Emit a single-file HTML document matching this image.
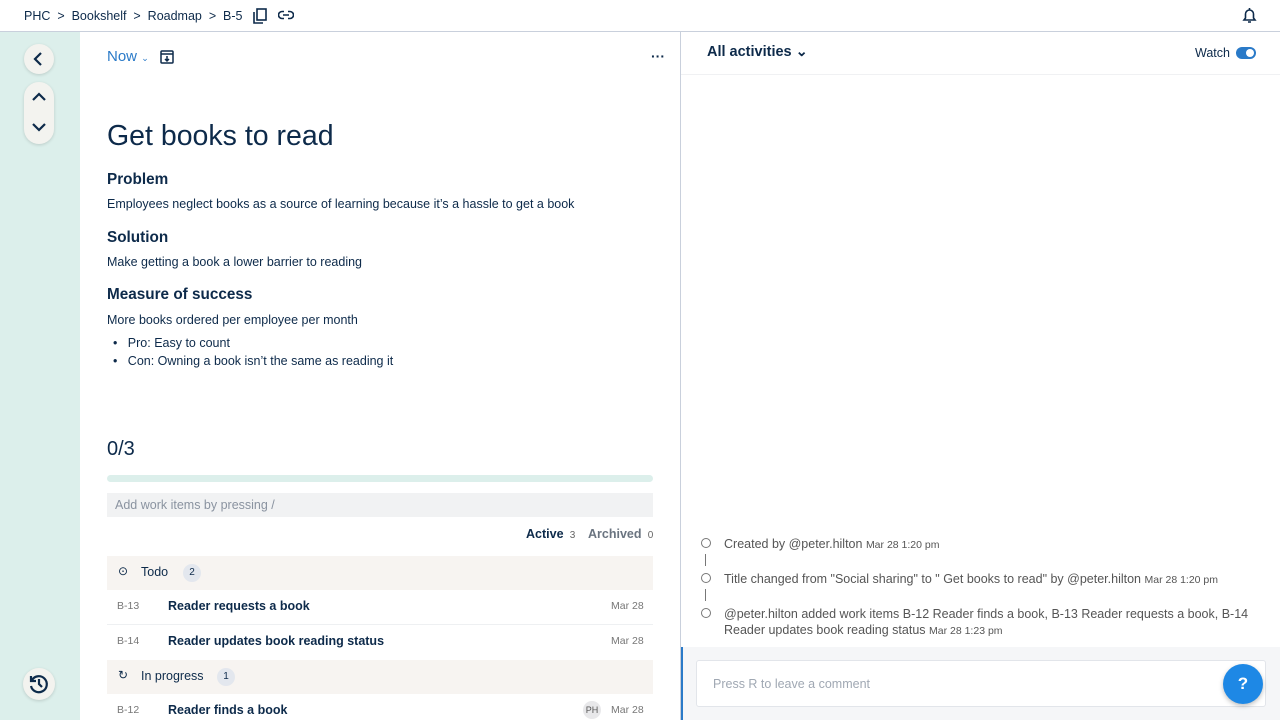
<!DOCTYPE html>
<html><head><meta charset="utf-8"><style>
*{box-sizing:border-box;margin:0;padding:0}
body{width:1280px;height:720px;overflow:hidden;font-family:"Liberation Sans",sans-serif;color:#0d2a4a;background:#fff;position:relative}
.a{position:absolute}
.top{left:0;top:0;width:1280px;height:32px;border-bottom:1px solid #c9d0dc;font-size:12.5px}
.side{left:0;top:32px;width:80px;height:688px;background:#dcefeb}
.btn{background:#f3f3ef;border-radius:16px;width:30px;box-shadow:0 1px 3px rgba(0,0,0,.15)}
.h3{font-size:15px;font-weight:bold}
.p{font-size:12.5px}
.row{left:107px;width:546px;font-size:12.5px}
.grp{background:#f7f4f1;height:34px}
.badge{display:inline-block;background:#e3e7ee;border-radius:9px;width:18px;height:18px;font-size:10px;text-align:center;line-height:18px}
.act{font-size:12.5px;color:#555}
.act small{font-size:10.5px}
.dot{width:10px;height:10px;border:1px solid #777;border-radius:50%}
</style></head><body>
<div class="a top">
<div class="a" style="left:24px;top:9px">PHC &nbsp;&gt;&nbsp; Bookshelf &nbsp;&gt;&nbsp; Roadmap &nbsp;&gt;&nbsp; B-5</div>
<svg class="a" style="left:253px;top:8px" width="14" height="16" viewBox="0 0 14 16" fill="none" stroke="#0d2a4a" stroke-width="1.6"><rect x="4" y="1" width="9" height="11"/><path d="M1 4v11h9"/></svg>
<svg class="a" style="left:278px;top:10px" width="16" height="10" viewBox="0 0 16 10" fill="none" stroke="#0d2a4a" stroke-width="1.6"><path d="M6 1.5H4a3.5 3.5 0 0 0 0 7h2M10 1.5h2a3.5 3.5 0 0 1 0 7h-2M5 5h6"/></svg>
<svg class="a" style="left:1242px;top:7px" width="15" height="17" viewBox="0 0 15 17" fill="none" stroke="#0d2a4a" stroke-width="1.6"><path d="M2 13h11l-1.5-2V7a4 4 0 0 0-8 0v4z M6 15h3 M7.5 1v2"/></svg>
</div>
<div class="a side">
<div class="a btn" style="left:24px;top:12px;height:30px"><svg width="30" height="30"><path d="M17 9l-6 6 6 6" fill="none" stroke="#0d2a4a" stroke-width="2.2"/></svg></div>
<div class="a btn" style="left:24px;top:50px;height:62px"><svg width="30" height="62"><path d="M9 18l6-6 6 6M9 42l6 6 6-6" fill="none" stroke="#0d2a4a" stroke-width="2.2"/></svg></div>
<div class="a btn" style="left:23px;top:636px;height:32px;width:32px"><svg width="32" height="32" viewBox="0 0 32 32" fill="none" stroke="#0d2a4a" stroke-width="2.2"><path d="M9 12a8 8 0 1 1-1 6"/><path d="M8 8v5h5" /><path d="M16 11v5l3 3"/></svg></div>
</div>
<div class="a" style="left:680px;top:32px;width:1px;height:688px;background:#c9d0dc"></div>
<div class="a" style="left:107px;top:48px;font-size:15px;color:#2a7ac8">Now <span style="font-size:9px">⌄</span></div>
<svg class="a" style="left:160px;top:50px" width="14" height="14" viewBox="0 0 14 14" fill="none" stroke="#0d2a4a" stroke-width="1.5"><rect x="1" y="1" width="12" height="12" rx="1"/><path d="M1 4h12M7 6v5M5 9l2 2 2-2"/></svg>
<div class="a" style="left:651px;top:48px;font-size:14px;font-weight:bold">···</div>
<div class="a" style="left:107px;top:120px;font-size:28.5px">Get books to read</div>
<div class="a h3" style="left:107px;top:171px;font-size:15.3px">Problem</div>
<div class="a p" style="left:107px;top:197px">Employees neglect books as a source of learning because it’s a hassle to get a book</div>
<div class="a h3" style="left:107px;top:229px;font-size:15.3px">Solution</div>
<div class="a p" style="left:107px;top:255px">Make getting a book a lower barrier to reading</div>
<div class="a h3" style="left:107px;top:286px;font-size:15.3px">Measure of success</div>
<div class="a p" style="left:107px;top:313px">More books ordered per employee per month</div>
<div class="a p" style="left:113px;top:336px">•&nbsp;&nbsp; Pro: Easy to count</div>
<div class="a p" style="left:113px;top:354px">•&nbsp;&nbsp; Con: Owning a book isn’t the same as reading it</div>
<div class="a" style="left:107px;top:438px;font-size:20px">0/3</div>
<div class="a" style="left:107px;top:475px;width:546px;height:7px;border-radius:4px;background:#dcefeb"></div>
<div class="a" style="left:107px;top:493px;width:546px;height:24px;background:#f1f2f3;font-size:12.5px;color:#8a93a0;padding:5px 8px">Add work items by pressing /</div>
<div class="a" style="left:526px;top:527px;font-size:12.5px;font-weight:bold">Active <span style="font-weight:normal;font-size:10px;color:#666">&nbsp;3</span></div>
<div class="a" style="left:588px;top:527px;font-size:12.5px;font-weight:bold;color:#6a7480">Archived <span style="font-weight:normal;font-size:10px;color:#666">&nbsp;0</span></div>
<div class="a row grp" style="top:556px"><span class="a" style="left:11px;top:8px;font-size:12px">⊙</span><span class="a" style="left:34px;top:9px">Todo</span><span class="a badge" style="left:76px;top:8px">2</span></div>
<div class="a row" style="top:590px;height:35px;border-bottom:1px solid #eef0f2"><span class="a" style="left:10px;top:10px;font-size:10.5px;color:#777">B-13</span><span class="a" style="left:61px;top:9px;font-weight:bold">Reader requests a book</span><span class="a" style="left:504px;top:10px;font-size:10.5px;color:#777">Mar 28</span></div>
<div class="a row" style="top:625px;height:34px"><span class="a" style="left:10px;top:10px;font-size:10.5px;color:#777">B-14</span><span class="a" style="left:61px;top:9px;font-weight:bold">Reader updates book reading status</span><span class="a" style="left:504px;top:10px;font-size:10.5px;color:#777">Mar 28</span></div>
<div class="a row grp" style="top:660px"><span class="a" style="left:11px;top:8px;font-size:12px">↻</span><span class="a" style="left:34px;top:9px">In progress</span><span class="a badge" style="left:110px;top:8px">1</span></div>
<div class="a row" style="top:694px;height:26px"><span class="a" style="left:10px;top:10px;font-size:10.5px;color:#777">B-12</span><span class="a" style="left:61px;top:9px;font-weight:bold">Reader finds a book</span><span class="a" style="left:476px;top:7px;width:18px;height:18px;border-radius:50%;background:#e8e8ea;font-size:9px;text-align:center;line-height:18px;color:#555">PH</span><span class="a" style="left:504px;top:10px;font-size:10.5px;color:#777">Mar 28</span></div>
<div class="a" style="left:707px;top:44px;font-size:14.5px;font-weight:bold">All activities ⌄</div>
<div class="a" style="left:1195px;top:46px;font-size:12.5px">Watch</div>
<div class="a" style="left:1236px;top:47px;width:20px;height:12px;border-radius:6px;background:#2a7ac8"><div class="a" style="left:10px;top:2px;width:8px;height:8px;border-radius:50%;background:#fff"></div></div>
<div class="a" style="left:681px;top:74px;width:599px;height:1px;background:#f0f1f3"></div>
<div class="a dot" style="left:701px;top:538px"></div>
<div class="a act" style="left:724px;top:537px">Created by @peter.hilton <small>Mar 28 1:20 pm</small></div>
<div class="a" style="left:705px;top:554px;width:1px;height:12px;background:#777"></div>
<div class="a dot" style="left:701px;top:573px"></div>
<div class="a act" style="left:724px;top:572px">Title changed from "Social sharing" to " Get books to read" by @peter.hilton <small>Mar 28 1:20 pm</small></div>
<div class="a" style="left:705px;top:589px;width:1px;height:12px;background:#777"></div>
<div class="a dot" style="left:701px;top:608px"></div>
<div class="a act" style="left:724px;top:606px;width:540px;line-height:16px">@peter.hilton added work items B-12 Reader finds a book, B-13 Reader requests a book, B-14 Reader updates book reading status <small>Mar 28 1:23 pm</small></div>
<div class="a" style="left:681px;top:647px;width:599px;height:73px;background:#f5f6f8;border-left:2px solid #2a7ac8"></div>
<div class="a" style="left:696px;top:660px;width:570px;height:47px;background:#fff;border:1px solid #e2e5ea;border-radius:3px;font-size:12.5px;color:#a0a8b3;padding:16px 16px">Press R to leave a comment</div>
<div class="a" style="left:1223px;top:664px;width:40px;height:40px;border-radius:50%;background:#1e88e5;color:#fff;font-weight:bold;font-size:17px;text-align:center;line-height:40px;box-shadow:0 2px 5px rgba(0,0,0,.25)">?</div>
</body></html>
